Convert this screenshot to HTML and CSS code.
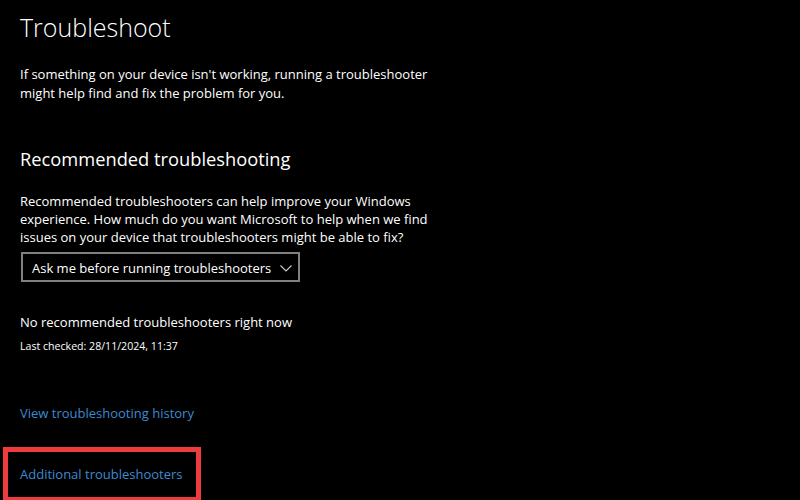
FILE: index.html
```html
<!DOCTYPE html>
<html lang="en">
<head>
<meta charset="utf-8">
<title>Troubleshoot</title>
<link rel="stylesheet" href="styles.css">
</head>
<body>
<main class="page">
  <h1 class="title">Troubleshoot</h1>
  <p class="intro">If something on your device isn't working, running a troubleshooter might help find and fix the problem for you.</p>
  <h2 class="section-title">Recommended troubleshooting</h2>
  <p class="desc">Recommended troubleshooters can help improve your Windows experience. How much do you want Microsoft to help when we find issues on your device that troubleshooters might be able to fix?</p>
  <div class="select">
    <span class="select-label">Ask me before running troubleshooters</span>
    <svg class="chevron" width="12" height="7" viewBox="0 0 12 7" aria-hidden="true"><path d="M0.5 0.5 L6 6 L11.5 0.5" fill="none" stroke="#cfcfcf" stroke-width="1.1"/></svg>
  </div>
  <p class="status">No recommended troubleshooters right now</p>
  <p class="checked">Last checked: 28/11/2024, 11:37</p>
  <a class="link history" href="#">View troubleshooting history</a>
  <div class="highlight">
    <a class="link" href="#">Additional troubleshooters</a>
  </div>
</main>
</body>
</html>
```

FILE: styles.css
```css
html, body {
  margin: 0;
  padding: 0;
  background: #000;
}
body {
  width: 800px;
  height: 500px;
  overflow: hidden;
  color: #fff;
  font-family: "Open Sans", "Noto Sans", "Liberation Sans", sans-serif;
}
.page {
  padding: 11px 0 0 20px;
  display: flex;
  flex-direction: column;
  align-items: flex-start;
}
.title {
  margin: 0;
  font-size: 25px;
  font-weight: 300;
  line-height: 32px;
}
.intro {
  margin: 22px 0 0;
  font-size: 13px;
  line-height: 19px;
  max-width: 428px;
}
.section-title {
  margin: 44px 0 0;
  font-size: 18.3px;
  font-weight: 400;
  line-height: 24px;
}
.desc {
  margin: 20.6px 0 0;
  font-size: 13px;
  line-height: 18px;
  max-width: 428px;
}
.select {
  margin: 6.5px 0 0 1px;
  width: 279px;
  height: 30px;
  box-sizing: border-box;
  border: 2px solid #808080;
  display: flex;
  align-items: center;
  justify-content: space-between;
  padding: 0 6px 0 9px;
}
.select-label {
  font-size: 13px;
  line-height: 20px;
  padding-top: 1px;
}
.chevron {
  display: block;
  margin-top: 2px;
}
.status {
  margin: 30px 0 0;
  font-size: 13px;
  line-height: 20px;
}
.checked {
  margin: 6.2px 0 0;
  font-size: 10.6px;
  line-height: 16px;
}
.link {
  color: #3d8ad3;
  text-decoration: none;
  font-size: 13px;
  line-height: 20px;
}
.history {
  margin-top: 48.8px;
}
.highlight {
  margin: 24.3px 0 0 -17px;
  border: 5px solid #ee3b3b;
  padding: 9.3px 13.5px 13px 12px;
}
```
